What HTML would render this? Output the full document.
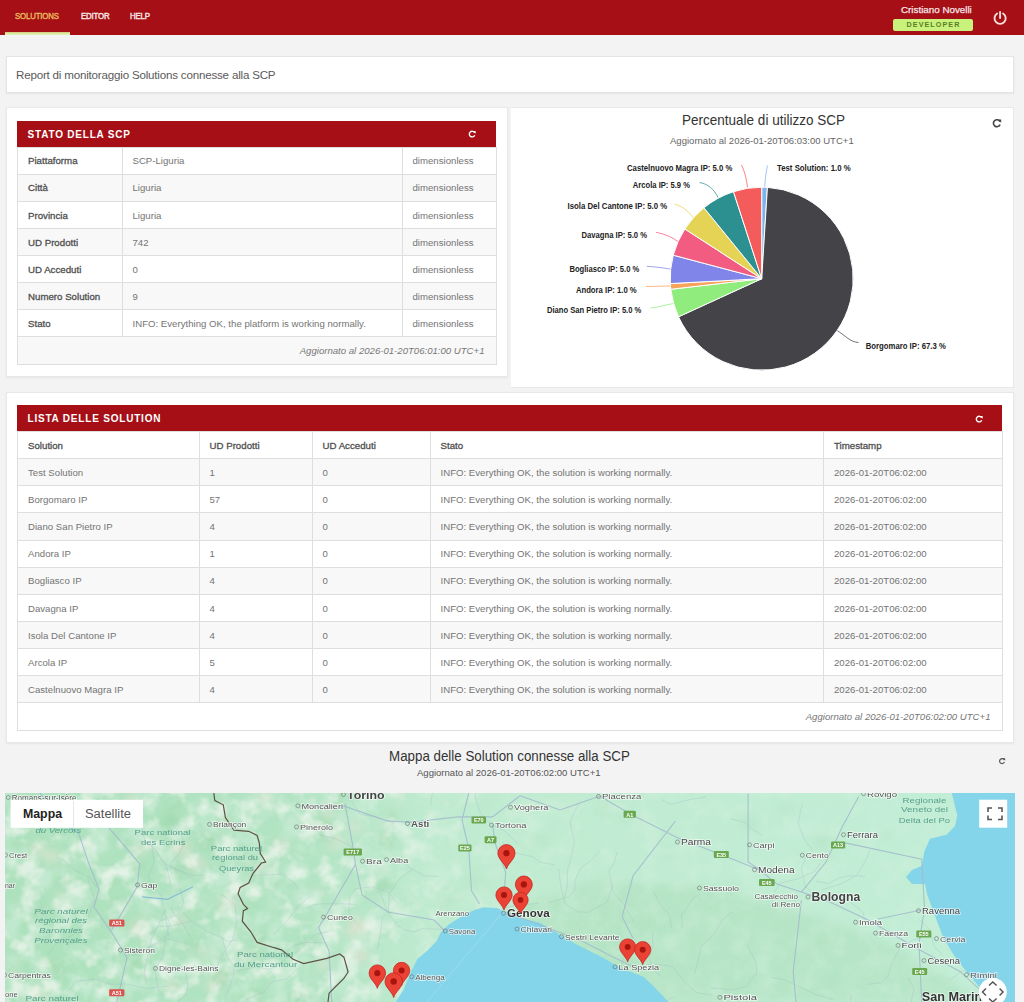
<!DOCTYPE html>
<html><head><meta charset="utf-8">
<style>
*{box-sizing:border-box;margin:0;padding:0}
html,body{width:1024px;height:1002px;overflow:hidden}
body{background:#f3f3f3;font-family:"Liberation Sans",sans-serif;color:#555;position:relative}
.abs{position:absolute}
#nav{left:0;top:0;width:1024px;height:35px;background:#a50f15}
.navi{position:absolute;top:11px;font-size:9px;color:#f6e4e4;-webkit-text-stroke:0.45px currentColor;letter-spacing:-0.2px;line-height:11px;transform:scaleX(0.87);transform-origin:0 0}
#uline{left:5px;top:32px;width:65px;height:3px;background:linear-gradient(#dcc27a,#d8eaa0 50%,#e2f3c0)}
.card{position:absolute;background:#fff;border:1px solid #e4e4e4;box-shadow:0 1px 2px rgba(0,0,0,0.06)}
.phead{position:absolute;background:#a50f15;color:#fff;font-weight:bold;font-size:10px;letter-spacing:0.8px}
.ref{position:absolute}
table{border-collapse:collapse;position:absolute;font-size:9.6px;color:#747474;table-layout:fixed}
td,th{border:1px solid #dedede;padding:0.4px 0 0 10px;height:27.15px;vertical-align:middle;text-align:left;white-space:nowrap;letter-spacing:0.02px;font-weight:normal}
th,td.b{color:#505050;font-size:9.7px;-webkit-text-stroke:0.3px currentColor;letter-spacing:0px}
tr.g td{background:#f8f8f8}
td.ft{text-align:right;font-style:italic;color:#777;padding-right:11px;letter-spacing:0px}
</style></head><body>
<div id="nav" class="abs">
  <div class="navi" style="left:15px;color:#e9b45c">SOLUTIONS</div>
  <div class="navi" style="left:81px">EDITOR</div>
  <div class="navi" style="left:130px">HELP</div>
  <div class="abs" style="left:901px;top:3.5px;font-size:9.8px;line-height:11px;color:#f6e6e6;letter-spacing:0px;-webkit-text-stroke:0.25px currentColor">Cristiano Novelli</div>
  <div class="abs" style="left:893px;top:19px;width:80px;height:12px;background:#c9f27c;border-radius:2px;font-size:7.2px;color:#5b7d24;letter-spacing:1.05px;text-align:center;line-height:12.5px;font-weight:bold;padding-left:1px">DEVELOPER</div>
  <svg class="abs" style="left:992px;top:10px" width="16" height="16" viewBox="0 0 16 16"><path d="M5.1 3.5A5.6 5.6 0 1 0 11.1 3.5" fill="none" stroke="#f8dcdc" stroke-width="1.9" stroke-linecap="round"/><path d="M8.1 2V8.1" stroke="#f8dcdc" stroke-width="1.9" stroke-linecap="round"/></svg>
</div>
<div id="uline" class="abs"></div>

<div class="card" style="left:6px;top:56px;width:1008px;height:37px">
  <div class="abs" style="left:9px;top:10px;font-size:11.6px;line-height:15px;color:#5a5a5a;letter-spacing:-0.2px">Report di monitoraggio Solutions connesse alla SCP</div>
</div>

<!-- left card -->
<div class="card" style="left:6px;top:107px;width:502px;height:270px;border-color:#e8e8e8"></div>
<div class="phead" style="left:17px;top:121px;width:478.5px;height:25.5px;line-height:27.5px;padding-left:10.5px">STATO DELLA SCP</div>
<svg class="ref" style="left:467.2px;top:129.3px" width="10" height="10" viewBox="-5 -5 10 10"><path d="M2.6 -1.2A2.8 2.8 0 1 0 2.7 1.2" fill="none" stroke="#fff" stroke-width="1.4"/><path d="M0.8 -3L3.6 -3L3.6 -0.2Z" fill="#fff"/></svg>
<table style="left:17px;top:146.5px;width:478.5px">
<col style="width:104.5px"><col style="width:280px"><col style="width:94px">
<tr><td class="b">Piattaforma</td><td>SCP-Liguria</td><td>dimensionless</td></tr>
<tr class="g"><td class="b">Città</td><td>Liguria</td><td>dimensionless</td></tr>
<tr><td class="b">Provincia</td><td>Liguria</td><td>dimensionless</td></tr>
<tr class="g"><td class="b">UD Prodotti</td><td>742</td><td>dimensionless</td></tr>
<tr><td class="b">UD Acceduti</td><td>0</td><td>dimensionless</td></tr>
<tr class="g"><td class="b">Numero Solution</td><td>9</td><td>dimensionless</td></tr>
<tr><td class="b">Stato</td><td>INFO: Everything OK, the platform is working normally.</td><td>dimensionless</td></tr>
<tr class="g"><td colspan="3" class="ft">Aggiornato al 2026-01-20T06:01:00 UTC+1</td></tr>
</table>

<svg class="abs" style="left:511px;top:107px" width="503" height="281" viewBox="511 107 503 281">
<rect x="510.5" y="107.5" width="503" height="280" fill="#fff" stroke="#e8e8e8"/>
<text x="682" y="125" textLength="163" lengthAdjust="spacingAndGlyphs" font-size="14.5" fill="#333">Percentuale di utilizzo SCP</text>
<text x="670" y="143.9" textLength="183.7" lengthAdjust="spacingAndGlyphs" font-size="9" fill="#666">Aggiornato al 2026-01-20T06:03:00 UTC+1</text>
<g transform="translate(996.8 123.2)"><path d="M3.2 -1.6A3.5 3.5 0 1 0 3.3 1.4" fill="none" stroke="#444" stroke-width="1.6"/><path d="M1.2 -3.6L4.4 -3.6L4.4 -0.4Z" fill="#444"/></g>
<path d="M741.5 165C744 170 746.5 178 747.5 187.5" fill="none" stroke="#f45b5b" stroke-width="1" opacity="0.75"/><path d="M767.5 165.5C766 172 765 180 764.8 187" fill="none" stroke="#7cb5ec" stroke-width="1" opacity="0.75"/><path d="M699.5 182.5C708 184 714 189 718 197.5" fill="none" stroke="#2b908f" stroke-width="1" opacity="0.75"/><path d="M674.3 204C682 206 688 211 693.5 217.8" fill="none" stroke="#e4d354" stroke-width="1" opacity="0.75"/><path d="M656 232.3C665 234 672 237 678 241.6" fill="none" stroke="#f15c80" stroke-width="1" opacity="0.75"/><path d="M646.8 266.3C657 267 664 268 670.7 269.2" fill="none" stroke="#8085e9" stroke-width="1" opacity="0.75"/><path d="M645.7 286.5C655 286.5 663 286 670.5 286" fill="none" stroke="#f7a35c" stroke-width="1" opacity="0.75"/><path d="M650.6 308C659 307 666 305 673.6 303.4" fill="none" stroke="#90ed7d" stroke-width="1" opacity="0.75"/><path d="M837.1 330.5C846 336 850 342 858.5 342.5" fill="none" stroke="#434348" stroke-width="1" opacity="0.75"/>
<path d="M761.7 278.7L761.70 187.20A91.5 91.5 0 0 1 767.43 187.38Z" fill="#7cb5ec" stroke="#fff" stroke-width="1" stroke-linejoin="round"/><path d="M761.7 278.7L767.43 187.38A91.5 91.5 0 1 1 678.51 316.81Z" fill="#434348" stroke="#fff" stroke-width="1" stroke-linejoin="round"/><path d="M761.7 278.7L678.51 316.81A91.5 91.5 0 0 1 670.81 289.29Z" fill="#90ed7d" stroke="#fff" stroke-width="1" stroke-linejoin="round"/><path d="M761.7 278.7L670.81 289.29A91.5 91.5 0 0 1 670.33 283.57Z" fill="#f7a35c" stroke="#fff" stroke-width="1" stroke-linejoin="round"/><path d="M761.7 278.7L670.33 283.57A91.5 91.5 0 0 1 673.28 255.16Z" fill="#8085e9" stroke="#fff" stroke-width="1" stroke-linejoin="round"/><path d="M761.7 278.7L673.28 255.16A91.5 91.5 0 0 1 684.85 229.03Z" fill="#f15c80" stroke="#fff" stroke-width="1" stroke-linejoin="round"/><path d="M761.7 278.7L684.85 229.03A91.5 91.5 0 0 1 703.92 207.75Z" fill="#e4d354" stroke="#fff" stroke-width="1" stroke-linejoin="round"/><path d="M761.7 278.7L703.92 207.75A91.5 91.5 0 0 1 733.48 191.66Z" fill="#2b908f" stroke="#fff" stroke-width="1" stroke-linejoin="round"/><path d="M761.7 278.7L733.48 191.66A91.5 91.5 0 0 1 761.70 187.20Z" fill="#f45b5b" stroke="#fff" stroke-width="1" stroke-linejoin="round"/>
<g font-size="8.4" font-weight="bold" fill="#222" stroke="#fff" stroke-width="0.6" paint-order="stroke"><text x="627.0" y="171.0" textLength="105.3" lengthAdjust="spacingAndGlyphs">Castelnuovo Magra IP: 5.0 %</text><text x="777" y="170.7" textLength="73.6" lengthAdjust="spacingAndGlyphs">Test Solution: 1.0 %</text><text x="632.8" y="187.5" textLength="57.2" lengthAdjust="spacingAndGlyphs">Arcola IP: 5.9 %</text><text x="567.5" y="208.5" textLength="99.7" lengthAdjust="spacingAndGlyphs">Isola Del Cantone IP: 5.0 %</text><text x="581.5" y="237.5" textLength="65.5" lengthAdjust="spacingAndGlyphs">Davagna IP: 5.0 %</text><text x="569.4" y="271.7" textLength="69.9" lengthAdjust="spacingAndGlyphs">Bogliasco IP: 5.0 %</text><text x="575.9" y="292.8" textLength="60.8" lengthAdjust="spacingAndGlyphs">Andora IP: 1.0 %</text><text x="546.9" y="312.8" textLength="94.5" lengthAdjust="spacingAndGlyphs">Diano San Pietro IP: 5.0 %</text><text x="865.7" y="348.5" textLength="80.1" lengthAdjust="spacingAndGlyphs">Borgomaro IP: 67.3 %</text></g>
</svg>

<!-- solutions list -->
<div class="card" style="left:6px;top:392px;width:1008px;height:351px;border-color:#e8e8e8"></div>
<div class="phead" style="left:17px;top:405px;width:984.5px;height:26px;line-height:27.5px;padding-left:10.5px">LISTA DELLE SOLUTION</div>
<svg class="ref" style="left:974.2px;top:413.6px" width="10" height="10" viewBox="-5 -5 10 10"><path d="M2.6 -1.2A2.8 2.8 0 1 0 2.7 1.2" fill="none" stroke="#fff" stroke-width="1.4"/><path d="M0.8 -3L3.6 -3L3.6 -0.2Z" fill="#fff"/></svg>
<table style="left:17px;top:431px;width:984.5px">
<col style="width:181.5px"><col style="width:113px"><col style="width:118px"><col style="width:393.5px"><col style="width:178.5px">
<tr><th>Solution</th><th>UD Prodotti</th><th>UD Acceduti</th><th>Stato</th><th>Timestamp</th></tr>
<tr class="g"><td>Test Solution</td><td>1</td><td>0</td><td>INFO: Everything OK, the solution is working normally.</td><td>2026-01-20T06:02:00</td></tr>
<tr><td>Borgomaro IP</td><td>57</td><td>0</td><td>INFO: Everything OK, the solution is working normally.</td><td>2026-01-20T06:02:00</td></tr>
<tr class="g"><td>Diano San Pietro IP</td><td>4</td><td>0</td><td>INFO: Everything OK, the solution is working normally.</td><td>2026-01-20T06:02:00</td></tr>
<tr><td>Andora IP</td><td>1</td><td>0</td><td>INFO: Everything OK, the solution is working normally.</td><td>2026-01-20T06:02:00</td></tr>
<tr class="g"><td>Bogliasco IP</td><td>4</td><td>0</td><td>INFO: Everything OK, the solution is working normally.</td><td>2026-01-20T06:02:00</td></tr>
<tr><td>Davagna IP</td><td>4</td><td>0</td><td>INFO: Everything OK, the solution is working normally.</td><td>2026-01-20T06:02:00</td></tr>
<tr class="g"><td>Isola Del Cantone IP</td><td>4</td><td>0</td><td>INFO: Everything OK, the solution is working normally.</td><td>2026-01-20T06:02:00</td></tr>
<tr><td>Arcola IP</td><td>5</td><td>0</td><td>INFO: Everything OK, the solution is working normally.</td><td>2026-01-20T06:02:00</td></tr>
<tr class="g"><td>Castelnuovo Magra IP</td><td>4</td><td>0</td><td>INFO: Everything OK, the solution is working normally.</td><td>2026-01-20T06:02:00</td></tr>
<tr><td colspan="5" class="ft">Aggiornato al 2026-01-20T06:02:00 UTC+1</td></tr>
</table>

<!-- map title -->
<svg class="abs" style="left:0;top:740px" width="1024" height="53" viewBox="0 740 1024 53">
<text x="389.1" y="761" font-size="14" fill="#333" textLength="240.7" lengthAdjust="spacingAndGlyphs">Mappa delle Solution connesse alla SCP</text>
<text x="417" y="775.5" font-size="8.6" fill="#555" textLength="183.5" lengthAdjust="spacingAndGlyphs">Aggiornato al 2026-01-20T06:02:00 UTC+1</text>
<g transform="translate(1002 761)"><path d="M2.3 -1.1A2.5 2.5 0 1 0 2.4 1.1" fill="none" stroke="#555" stroke-width="1.2"/><path d="M0.7 -2.7L3.2 -2.7L3.2 -0.2Z" fill="#555"/></g>
</svg>

<svg class="abs" style="left:5px;top:793px" width="1010" height="209" viewBox="5 793 1010 209">
<defs><linearGradient id="lg" x1="0" x2="1" y1="0" y2="0"><stop offset="0" stop-color="#ade1bd"/><stop offset="0.3" stop-color="#b2e4c3"/><stop offset="0.42" stop-color="#bfebd0"/><stop offset="1" stop-color="#c3eed7"/></linearGradient>
<filter id="bl" x="-50%" y="-50%" width="200%" height="200%"><feGaussianBlur stdDeviation="4"/></filter></defs>
<rect x="5" y="793" width="1010" height="209" fill="url(#lg)"/>
<g filter="url(#bl)"><ellipse cx="133" cy="825" rx="8" ry="6" fill="#d6efde" opacity="0.6"/><ellipse cx="329" cy="813" rx="7" ry="5" fill="#e9dfd0" opacity="0.6"/><ellipse cx="90" cy="811" rx="6" ry="4" fill="#e2e6d6" opacity="0.6"/><ellipse cx="41" cy="882" rx="9" ry="7" fill="#d6efde" opacity="0.6"/><ellipse cx="379" cy="925" rx="7" ry="5" fill="#d6efde" opacity="0.6"/><ellipse cx="233" cy="876" rx="10" ry="7" fill="#d6efde" opacity="0.6"/><ellipse cx="225" cy="821" rx="6" ry="4" fill="#e9dfd0" opacity="0.6"/><ellipse cx="52" cy="857" rx="9" ry="7" fill="#e2e6d6" opacity="0.6"/><ellipse cx="46" cy="912" rx="4" ry="3" fill="#d6efde" opacity="0.6"/><ellipse cx="221" cy="806" rx="3" ry="3" fill="#e2e6d6" opacity="0.6"/><ellipse cx="201" cy="904" rx="8" ry="6" fill="#a3d8ae" opacity="0.6"/><ellipse cx="236" cy="888" rx="5" ry="4" fill="#e2e6d6" opacity="0.6"/><ellipse cx="281" cy="844" rx="7" ry="5" fill="#e9dfd0" opacity="0.6"/><ellipse cx="201" cy="865" rx="6" ry="5" fill="#e9dfd0" opacity="0.6"/><ellipse cx="392" cy="818" rx="6" ry="4" fill="#9bd3a9" opacity="0.6"/><ellipse cx="65" cy="895" rx="3" ry="2" fill="#d0ecd8" opacity="0.6"/><ellipse cx="36" cy="910" rx="9" ry="6" fill="#9bd3a9" opacity="0.6"/><ellipse cx="139" cy="866" rx="6" ry="5" fill="#a3d8ae" opacity="0.6"/><ellipse cx="32" cy="813" rx="5" ry="4" fill="#d0ecd8" opacity="0.6"/><ellipse cx="267" cy="806" rx="8" ry="6" fill="#d0ecd8" opacity="0.6"/><ellipse cx="233" cy="935" rx="6" ry="5" fill="#d0ecd8" opacity="0.6"/><ellipse cx="157" cy="933" rx="3" ry="2" fill="#a3d8ae" opacity="0.6"/><ellipse cx="145" cy="921" rx="6" ry="5" fill="#e2e6d6" opacity="0.6"/><ellipse cx="308" cy="820" rx="5" ry="4" fill="#a3d8ae" opacity="0.6"/><ellipse cx="367" cy="897" rx="4" ry="3" fill="#a3d8ae" opacity="0.6"/><ellipse cx="222" cy="978" rx="9" ry="7" fill="#e9dfd0" opacity="0.6"/><ellipse cx="115" cy="880" rx="6" ry="4" fill="#a3d8ae" opacity="0.6"/><ellipse cx="383" cy="825" rx="4" ry="3" fill="#e2e6d6" opacity="0.6"/><ellipse cx="265" cy="796" rx="9" ry="7" fill="#e2e6d6" opacity="0.6"/><ellipse cx="109" cy="794" rx="6" ry="4" fill="#9bd3a9" opacity="0.6"/><ellipse cx="246" cy="860" rx="4" ry="3" fill="#e9dfd0" opacity="0.6"/><ellipse cx="380" cy="930" rx="8" ry="6" fill="#a3d8ae" opacity="0.6"/><ellipse cx="360" cy="956" rx="9" ry="7" fill="#e9dfd0" opacity="0.6"/><ellipse cx="160" cy="876" rx="4" ry="3" fill="#d0ecd8" opacity="0.6"/><ellipse cx="163" cy="833" rx="10" ry="7" fill="#a3d8ae" opacity="0.6"/><ellipse cx="69" cy="864" rx="3" ry="3" fill="#d6efde" opacity="0.6"/><ellipse cx="229" cy="905" rx="10" ry="7" fill="#e9dfd0" opacity="0.6"/><ellipse cx="15" cy="976" rx="7" ry="5" fill="#e2e6d6" opacity="0.6"/><ellipse cx="256" cy="993" rx="7" ry="5" fill="#a3d8ae" opacity="0.6"/><ellipse cx="54" cy="970" rx="10" ry="7" fill="#a3d8ae" opacity="0.6"/><ellipse cx="195" cy="858" rx="4" ry="3" fill="#d0ecd8" opacity="0.6"/><ellipse cx="140" cy="848" rx="9" ry="7" fill="#e2e6d6" opacity="0.6"/><ellipse cx="209" cy="836" rx="10" ry="7" fill="#9bd3a9" opacity="0.6"/><ellipse cx="63" cy="907" rx="3" ry="2" fill="#e9dfd0" opacity="0.6"/><ellipse cx="123" cy="927" rx="4" ry="3" fill="#9bd3a9" opacity="0.6"/><ellipse cx="210" cy="983" rx="5" ry="4" fill="#e2e6d6" opacity="0.6"/><ellipse cx="215" cy="956" rx="5" ry="4" fill="#e2e6d6" opacity="0.6"/><ellipse cx="247" cy="958" rx="8" ry="6" fill="#e2e6d6" opacity="0.6"/><ellipse cx="323" cy="964" rx="8" ry="6" fill="#e2e6d6" opacity="0.6"/><ellipse cx="84" cy="896" rx="8" ry="6" fill="#d6efde" opacity="0.6"/><ellipse cx="317" cy="892" rx="4" ry="3" fill="#e9dfd0" opacity="0.6"/><ellipse cx="383" cy="886" rx="10" ry="7" fill="#9bd3a9" opacity="0.6"/><ellipse cx="382" cy="869" rx="5" ry="3" fill="#e2e6d6" opacity="0.6"/><ellipse cx="191" cy="864" rx="6" ry="5" fill="#e9dfd0" opacity="0.6"/><ellipse cx="337" cy="893" rx="8" ry="6" fill="#d0ecd8" opacity="0.6"/><ellipse cx="38" cy="931" rx="9" ry="7" fill="#d0ecd8" opacity="0.6"/><ellipse cx="301" cy="893" rx="4" ry="3" fill="#d0ecd8" opacity="0.6"/><ellipse cx="136" cy="960" rx="10" ry="7" fill="#a3d8ae" opacity="0.6"/><ellipse cx="188" cy="948" rx="4" ry="3" fill="#e2e6d6" opacity="0.6"/><ellipse cx="72" cy="820" rx="4" ry="3" fill="#a3d8ae" opacity="0.6"/><ellipse cx="324" cy="824" rx="9" ry="7" fill="#a3d8ae" opacity="0.6"/><ellipse cx="265" cy="866" rx="7" ry="5" fill="#e2e6d6" opacity="0.6"/><ellipse cx="13" cy="960" rx="8" ry="6" fill="#d6efde" opacity="0.6"/><ellipse cx="213" cy="988" rx="6" ry="5" fill="#e2e6d6" opacity="0.6"/><ellipse cx="331" cy="837" rx="5" ry="4" fill="#9bd3a9" opacity="0.6"/><ellipse cx="203" cy="953" rx="5" ry="4" fill="#e9dfd0" opacity="0.6"/><ellipse cx="171" cy="820" rx="9" ry="7" fill="#9bd3a9" opacity="0.6"/><ellipse cx="360" cy="931" rx="9" ry="7" fill="#e9dfd0" opacity="0.6"/><ellipse cx="171" cy="985" rx="7" ry="5" fill="#e9dfd0" opacity="0.6"/><ellipse cx="65" cy="900" rx="9" ry="7" fill="#e2e6d6" opacity="0.6"/><ellipse cx="245" cy="955" rx="4" ry="3" fill="#e2e6d6" opacity="0.6"/><ellipse cx="192" cy="945" rx="7" ry="5" fill="#9bd3a9" opacity="0.6"/><ellipse cx="275" cy="904" rx="6" ry="5" fill="#d6efde" opacity="0.6"/><ellipse cx="354" cy="805" rx="4" ry="3" fill="#d6efde" opacity="0.6"/><ellipse cx="310" cy="899" rx="7" ry="5" fill="#d6efde" opacity="0.6"/><ellipse cx="180" cy="921" rx="7" ry="5" fill="#e9dfd0" opacity="0.6"/><ellipse cx="84" cy="851" rx="7" ry="5" fill="#a3d8ae" opacity="0.6"/><ellipse cx="206" cy="845" rx="7" ry="5" fill="#9bd3a9" opacity="0.6"/><ellipse cx="369" cy="980" rx="4" ry="3" fill="#a3d8ae" opacity="0.6"/><ellipse cx="59" cy="818" rx="6" ry="5" fill="#d6efde" opacity="0.6"/><ellipse cx="270" cy="883" rx="4" ry="3" fill="#9bd3a9" opacity="0.6"/><ellipse cx="315" cy="980" rx="4" ry="3" fill="#d0ecd8" opacity="0.6"/><ellipse cx="259" cy="870" rx="5" ry="4" fill="#e2e6d6" opacity="0.6"/><ellipse cx="387" cy="839" rx="10" ry="7" fill="#a3d8ae" opacity="0.6"/><ellipse cx="355" cy="827" rx="8" ry="6" fill="#e2e6d6" opacity="0.6"/><ellipse cx="69" cy="883" rx="7" ry="5" fill="#9bd3a9" opacity="0.6"/><ellipse cx="171" cy="868" rx="4" ry="3" fill="#9bd3a9" opacity="0.6"/><ellipse cx="13" cy="909" rx="6" ry="5" fill="#d6efde" opacity="0.6"/><ellipse cx="157" cy="901" rx="5" ry="4" fill="#d6efde" opacity="0.6"/><ellipse cx="50" cy="985" rx="5" ry="3" fill="#d6efde" opacity="0.6"/><ellipse cx="38" cy="850" rx="9" ry="7" fill="#e2e6d6" opacity="0.6"/><ellipse cx="112" cy="820" rx="6" ry="4" fill="#d0ecd8" opacity="0.6"/><ellipse cx="328" cy="847" rx="4" ry="3" fill="#e9dfd0" opacity="0.6"/><ellipse cx="230" cy="939" rx="4" ry="3" fill="#d6efde" opacity="0.6"/><ellipse cx="321" cy="831" rx="9" ry="7" fill="#9bd3a9" opacity="0.6"/><ellipse cx="376" cy="926" rx="9" ry="6" fill="#d6efde" opacity="0.6"/><ellipse cx="245" cy="839" rx="5" ry="4" fill="#d6efde" opacity="0.6"/><ellipse cx="184" cy="864" rx="7" ry="5" fill="#9bd3a9" opacity="0.6"/><ellipse cx="251" cy="802" rx="8" ry="6" fill="#d6efde" opacity="0.6"/><ellipse cx="388" cy="848" rx="4" ry="3" fill="#9bd3a9" opacity="0.6"/><ellipse cx="253" cy="904" rx="4" ry="3" fill="#a3d8ae" opacity="0.6"/><ellipse cx="203" cy="830" rx="5" ry="4" fill="#d6efde" opacity="0.6"/><ellipse cx="398" cy="801" rx="3" ry="2" fill="#e9dfd0" opacity="0.6"/><ellipse cx="223" cy="833" rx="6" ry="5" fill="#a3d8ae" opacity="0.6"/><ellipse cx="47" cy="964" rx="6" ry="5" fill="#a3d8ae" opacity="0.6"/><ellipse cx="221" cy="979" rx="10" ry="7" fill="#9bd3a9" opacity="0.6"/><ellipse cx="277" cy="998" rx="5" ry="4" fill="#d0ecd8" opacity="0.6"/><ellipse cx="293" cy="822" rx="10" ry="7" fill="#d6efde" opacity="0.6"/><ellipse cx="336" cy="796" rx="7" ry="6" fill="#9bd3a9" opacity="0.6"/><ellipse cx="175" cy="805" rx="8" ry="6" fill="#a3d8ae" opacity="0.6"/><ellipse cx="349" cy="933" rx="5" ry="4" fill="#e2e6d6" opacity="0.6"/><ellipse cx="279" cy="802" rx="4" ry="3" fill="#9bd3a9" opacity="0.6"/><ellipse cx="181" cy="848" rx="10" ry="7" fill="#e9dfd0" opacity="0.6"/><ellipse cx="133" cy="800" rx="9" ry="7" fill="#e2e6d6" opacity="0.6"/><ellipse cx="146" cy="793" rx="6" ry="4" fill="#a3d8ae" opacity="0.6"/><ellipse cx="115" cy="930" rx="5" ry="4" fill="#d6efde" opacity="0.6"/><ellipse cx="41" cy="964" rx="4" ry="3" fill="#e9dfd0" opacity="0.6"/><ellipse cx="21" cy="798" rx="5" ry="4" fill="#e2e6d6" opacity="0.6"/><ellipse cx="38" cy="993" rx="9" ry="7" fill="#e2e6d6" opacity="0.6"/><ellipse cx="265" cy="943" rx="9" ry="7" fill="#a3d8ae" opacity="0.6"/><ellipse cx="307" cy="944" rx="6" ry="5" fill="#9bd3a9" opacity="0.6"/><ellipse cx="291" cy="927" rx="3" ry="2" fill="#d0ecd8" opacity="0.6"/><ellipse cx="357" cy="924" rx="8" ry="6" fill="#e9dfd0" opacity="0.6"/><ellipse cx="60" cy="902" rx="7" ry="5" fill="#d6efde" opacity="0.6"/><ellipse cx="331" cy="915" rx="9" ry="7" fill="#d0ecd8" opacity="0.6"/><ellipse cx="383" cy="927" rx="4" ry="3" fill="#d6efde" opacity="0.6"/><ellipse cx="58" cy="868" rx="4" ry="3" fill="#a3d8ae" opacity="0.6"/><ellipse cx="226" cy="924" rx="7" ry="6" fill="#d0ecd8" opacity="0.6"/><ellipse cx="102" cy="848" rx="6" ry="5" fill="#d6efde" opacity="0.6"/><ellipse cx="301" cy="898" rx="7" ry="5" fill="#d0ecd8" opacity="0.6"/><ellipse cx="213" cy="949" rx="6" ry="5" fill="#d6efde" opacity="0.6"/><ellipse cx="339" cy="842" rx="8" ry="6" fill="#e2e6d6" opacity="0.6"/><ellipse cx="297" cy="997" rx="6" ry="5" fill="#a3d8ae" opacity="0.6"/><ellipse cx="35" cy="983" rx="5" ry="4" fill="#d6efde" opacity="0.6"/><ellipse cx="249" cy="927" rx="4" ry="3" fill="#e2e6d6" opacity="0.6"/><ellipse cx="136" cy="929" rx="8" ry="6" fill="#e9dfd0" opacity="0.6"/><ellipse cx="229" cy="796" rx="3" ry="3" fill="#9bd3a9" opacity="0.6"/><ellipse cx="389" cy="814" rx="5" ry="3" fill="#a3d8ae" opacity="0.6"/><ellipse cx="120" cy="901" rx="6" ry="5" fill="#a3d8ae" opacity="0.6"/><ellipse cx="308" cy="1001" rx="7" ry="5" fill="#9bd3a9" opacity="0.6"/><ellipse cx="987" cy="989" rx="5" ry="4" fill="#b4e3c4" opacity="0.5"/><ellipse cx="446" cy="899" rx="12" ry="8" fill="#b4e3c4" opacity="0.5"/><ellipse cx="632" cy="985" rx="12" ry="8" fill="#d2f1de" opacity="0.5"/><ellipse cx="749" cy="823" rx="9" ry="6" fill="#b4e3c4" opacity="0.5"/><ellipse cx="480" cy="964" rx="9" ry="6" fill="#d2f1de" opacity="0.5"/><ellipse cx="822" cy="841" rx="11" ry="8" fill="#b4e3c4" opacity="0.5"/><ellipse cx="636" cy="826" rx="12" ry="8" fill="#cbeed8" opacity="0.5"/><ellipse cx="670" cy="856" rx="6" ry="4" fill="#b4e3c4" opacity="0.5"/><ellipse cx="626" cy="818" rx="7" ry="5" fill="#b4e3c4" opacity="0.5"/><ellipse cx="850" cy="968" rx="6" ry="4" fill="#d2f1de" opacity="0.5"/><ellipse cx="828" cy="981" rx="7" ry="5" fill="#b4e3c4" opacity="0.5"/><ellipse cx="439" cy="875" rx="11" ry="8" fill="#d2f1de" opacity="0.5"/><ellipse cx="616" cy="882" rx="7" ry="5" fill="#d2f1de" opacity="0.5"/><ellipse cx="568" cy="804" rx="10" ry="7" fill="#cbeed8" opacity="0.5"/><ellipse cx="961" cy="845" rx="7" ry="5" fill="#cbeed8" opacity="0.5"/><ellipse cx="589" cy="955" rx="10" ry="7" fill="#b4e3c4" opacity="0.5"/><ellipse cx="931" cy="963" rx="9" ry="7" fill="#cbeed8" opacity="0.5"/><ellipse cx="730" cy="943" rx="5" ry="4" fill="#cbeed8" opacity="0.5"/><ellipse cx="647" cy="922" rx="6" ry="4" fill="#b4e3c4" opacity="0.5"/><ellipse cx="691" cy="984" rx="9" ry="6" fill="#d2f1de" opacity="0.5"/><ellipse cx="683" cy="865" rx="7" ry="5" fill="#cbeed8" opacity="0.5"/><ellipse cx="843" cy="929" rx="8" ry="5" fill="#d2f1de" opacity="0.5"/><ellipse cx="581" cy="909" rx="8" ry="5" fill="#d2f1de" opacity="0.5"/><ellipse cx="786" cy="809" rx="9" ry="6" fill="#b4e3c4" opacity="0.5"/><ellipse cx="730" cy="888" rx="7" ry="5" fill="#b4e3c4" opacity="0.5"/><ellipse cx="656" cy="907" rx="7" ry="5" fill="#d2f1de" opacity="0.5"/><ellipse cx="605" cy="812" rx="7" ry="5" fill="#b4e3c4" opacity="0.5"/><ellipse cx="886" cy="835" rx="5" ry="4" fill="#b4e3c4" opacity="0.5"/><ellipse cx="630" cy="949" rx="6" ry="5" fill="#b4e3c4" opacity="0.5"/><ellipse cx="603" cy="806" rx="7" ry="5" fill="#b4e3c4" opacity="0.5"/><ellipse cx="476" cy="898" rx="9" ry="7" fill="#d2f1de" opacity="0.5"/><ellipse cx="456" cy="980" rx="8" ry="5" fill="#cbeed8" opacity="0.5"/><ellipse cx="668" cy="992" rx="11" ry="8" fill="#d2f1de" opacity="0.5"/><ellipse cx="476" cy="882" rx="10" ry="7" fill="#b4e3c4" opacity="0.5"/><ellipse cx="981" cy="895" rx="6" ry="4" fill="#cbeed8" opacity="0.5"/><ellipse cx="913" cy="996" rx="7" ry="5" fill="#d2f1de" opacity="0.5"/><ellipse cx="534" cy="825" rx="12" ry="8" fill="#d2f1de" opacity="0.5"/><ellipse cx="965" cy="944" rx="10" ry="7" fill="#b4e3c4" opacity="0.5"/><ellipse cx="451" cy="955" rx="5" ry="4" fill="#d2f1de" opacity="0.5"/><ellipse cx="540" cy="985" rx="10" ry="7" fill="#b4e3c4" opacity="0.5"/><ellipse cx="977" cy="924" rx="9" ry="6" fill="#b4e3c4" opacity="0.5"/><ellipse cx="819" cy="816" rx="5" ry="4" fill="#cbeed8" opacity="0.5"/><ellipse cx="966" cy="833" rx="7" ry="5" fill="#cbeed8" opacity="0.5"/><ellipse cx="401" cy="905" rx="12" ry="8" fill="#b4e3c4" opacity="0.5"/><ellipse cx="975" cy="928" rx="11" ry="8" fill="#b4e3c4" opacity="0.5"/><ellipse cx="716" cy="907" rx="5" ry="4" fill="#b4e3c4" opacity="0.5"/><ellipse cx="823" cy="857" rx="5" ry="4" fill="#b4e3c4" opacity="0.5"/><ellipse cx="931" cy="928" rx="6" ry="4" fill="#d2f1de" opacity="0.5"/><ellipse cx="800" cy="986" rx="7" ry="5" fill="#d2f1de" opacity="0.5"/><ellipse cx="817" cy="943" rx="8" ry="5" fill="#b4e3c4" opacity="0.5"/><ellipse cx="519" cy="960" rx="10" ry="7" fill="#cbeed8" opacity="0.5"/><ellipse cx="440" cy="897" rx="6" ry="4" fill="#d2f1de" opacity="0.5"/><ellipse cx="538" cy="839" rx="10" ry="7" fill="#b4e3c4" opacity="0.5"/><ellipse cx="465" cy="923" rx="9" ry="6" fill="#d2f1de" opacity="0.5"/><ellipse cx="691" cy="983" rx="5" ry="4" fill="#cbeed8" opacity="0.5"/><ellipse cx="488" cy="875" rx="6" ry="5" fill="#cbeed8" opacity="0.5"/><ellipse cx="485" cy="804" rx="5" ry="4" fill="#b4e3c4" opacity="0.5"/><ellipse cx="670" cy="942" rx="7" ry="5" fill="#d2f1de" opacity="0.5"/><ellipse cx="999" cy="988" rx="7" ry="5" fill="#d2f1de" opacity="0.5"/><ellipse cx="791" cy="903" rx="8" ry="6" fill="#b4e3c4" opacity="0.5"/></g>
<filter id="tx" x="0" y="0" width="100%" height="100%"><feTurbulence type="fractalNoise" baseFrequency="0.045" numOctaves="3" seed="5"/><feColorMatrix type="matrix" values="0 0 0 0 0.58  0 0 0 0 0.84  0 0 0 0 0.67  3.2 0 0 0 -1.45"/></filter>
<filter id="tx2" x="0" y="0" width="100%" height="100%"><feTurbulence type="fractalNoise" baseFrequency="0.05" numOctaves="3" seed="11"/><feColorMatrix type="matrix" values="0 0 0 0 0.90  0 0 0 0 0.93  0 0 0 0 0.88  3.2 0 0 0 -1.5"/></filter>
<linearGradient id="mk" x1="0" x2="1"><stop offset="0" stop-color="#fff"/><stop offset="0.33" stop-color="#fff"/><stop offset="0.5" stop-color="#444"/><stop offset="1" stop-color="#222"/></linearGradient><mask id="mm"><rect x="5" y="793" width="1009" height="209" fill="url(#mk)"/></mask>
<g mask="url(#mm)"><rect x="5" y="793" width="1009" height="209" filter="url(#tx)" opacity="0.7"/><rect x="5" y="793" width="1009" height="209" filter="url(#tx2)" opacity="0.7"/></g>
<mask id="ap"><path d="M470 1002 L470 930 L520 905 L600 880 L700 885 L780 905 L860 930 L930 965 L980 1002 Z" fill="#fff" filter="url(#bl)"/></mask>
<g mask="url(#ap)"><rect x="400" y="860" width="615" height="142" fill="#a9dbb6" opacity="0.45"/><rect x="400" y="860" width="615" height="142" filter="url(#tx)" opacity="0.5"/></g>
<g fill="none" stroke="#9fb8c2" stroke-width="0.7" opacity="0.45"><path d="M169.1 937.2 L165.3 915.6 L160.7 894.7 L150.5 883.1 L148.4 875.2 L154.3 862.5 L151.8 844.1"/><path d="M921.9 938.0 L913.6 939.8 L900.4 946.8 L890.7 965.8 L888.1 975.7 L881.3 982.7 L867.1 984.4"/><path d="M554.2 864.7 L539.9 862.3 L532.8 856.6 L515.7 853.2 L502.3 842.4"/><path d="M949.6 980.6 L961.0 971.4 L971.7 969.7 L989.4 979.9"/><path d="M412.6 869.3 L400.3 877.7 L389.3 893.9 L388.3 911.9 L382.4 917.4 L380.2 933.6 L377.5 949.4"/><path d="M322.0 997.8 L334.1 1013.4 L349.1 1024.5 L351.8 1035.6 L366.4 1050.6"/><path d="M178.1 882.6 L183.9 902.4 L178.0 914.7 L157.8 921.9"/><path d="M592.6 977.6 L571.9 973.2 L556.4 976.3 L543.2 980.3 L534.5 979.5 L515.1 984.4 L506.7 984.4"/><path d="M252.4 875.5 L270.8 874.7 L282.3 873.8 L294.4 883.1 L298.8 890.3"/><path d="M216.0 968.2 L222.0 955.6 L232.8 938.9 L236.9 923.9 L235.2 905.3 L221.7 894.0"/><path d="M954.2 797.9 L947.6 783.1 L937.7 773.7 L936.1 753.1 L930.4 745.7"/><path d="M98.5 798.3 L93.4 806.5 L91.0 818.5 L80.3 826.9 L63.6 827.6"/><path d="M185.7 972.2 L187.7 987.1 L185.5 995.7 L174.7 1003.6"/><path d="M865.1 876.2 L847.4 875.8 L839.1 878.1 L828.0 883.5 L816.1 881.2"/><path d="M505.6 907.8 L514.2 905.6 L526.6 904.3 L538.7 903.3"/><path d="M626.6 951.4 L621.8 963.4 L619.8 985.2 L624.4 993.0 L642.6 999.7 L652.9 1009.6"/><path d="M623.3 797.1 L613.4 785.6 L612.4 776.7 L599.2 765.6 L587.4 765.9 L573.8 764.4 L554.6 764.5"/><path d="M401.9 861.4 L410.0 868.1 L424.5 875.8 L438.8 876.3"/><path d="M634.4 922.5 L623.9 904.5 L613.1 891.9 L609.0 870.8 L613.5 864.1 L617.0 852.3"/><path d="M394.3 823.4 L378.7 817.4 L360.6 814.3 L347.7 796.6"/><path d="M170.6 883.6 L166.7 866.4 L154.6 848.9 L145.6 841.7 L142.2 832.1 L141.7 821.3"/><path d="M600.0 851.0 L590.3 861.2 L580.6 868.2 L575.1 880.5 L574.5 891.1 L568.5 897.0 L548.2 902.8"/><path d="M706.1 797.0 L692.1 799.2 L670.8 804.3 L661.8 799.8"/><path d="M973.0 832.8 L967.8 841.2 L951.2 851.5 L943.7 855.7"/><path d="M191.6 877.2 L174.0 868.8 L161.8 860.9 L153.2 846.0 L140.0 840.9"/><path d="M833.6 999.7 L814.9 994.2 L800.0 986.9 L782.4 979.2 L770.7 977.4"/><path d="M356.4 855.3 L351.2 846.0 L333.4 838.0 L320.7 835.4"/><path d="M166.3 915.3 L169.9 924.1 L165.3 938.9 L162.6 956.4 L155.0 969.7 L158.0 989.1 L163.0 996.1"/><path d="M355.5 904.3 L342.4 903.8 L322.3 903.8 L314.0 904.5 L306.1 908.3"/><path d="M682.5 928.4 L681.3 915.0 L693.5 897.8 L700.7 893.9"/><path d="M355.2 921.2 L348.8 913.2 L349.2 897.7 L355.7 888.9 L371.3 886.7 L388.8 892.2 L396.8 902.6"/><path d="M87.4 877.8 L94.6 898.5 L87.8 918.7 L73.2 934.9 L56.7 943.0 L47.3 955.2"/><path d="M373.5 1000.2 L375.3 1014.0 L373.4 1032.7 L365.2 1047.7 L363.8 1061.7"/><path d="M381.1 895.3 L388.1 913.1 L396.5 924.4 L404.6 930.2 L414.7 931.9 L422.5 928.6 L442.6 929.4"/><path d="M300.1 967.0 L286.2 978.8 L271.7 981.8 L263.7 992.2 L249.8 997.9 L237.7 1003.9 L221.9 1007.9"/><path d="M694.6 973.8 L699.2 956.2 L701.0 946.6 L713.0 935.4 L723.4 918.5 L732.7 911.8"/><path d="M134.2 950.1 L146.3 948.7 L155.5 942.8 L170.6 933.0"/><path d="M221.8 936.5 L226.7 955.6 L233.3 965.3 L234.0 974.1 L228.6 989.6 L221.1 1010.3"/><path d="M236.3 940.2 L228.2 941.8 L219.6 936.6 L206.4 931.4 L191.6 920.9 L181.3 911.3"/><path d="M236.3 971.1 L256.5 966.9 L269.1 969.3 L276.8 966.4 L290.0 954.7"/><path d="M302.8 994.6 L291.5 1006.9 L280.8 1010.0 L271.1 1022.0 L270.3 1035.7"/><path d="M762.1 835.5 L752.6 829.1 L745.7 822.8 L730.2 818.5"/><path d="M819.0 901.8 L805.1 885.5 L801.3 868.2 L806.7 855.5"/><path d="M579.2 802.7 L569.9 821.5 L574.5 842.5 L570.4 860.1 L567.6 870.0 L567.2 887.3 L563.6 900.3"/><path d="M802.2 804.2 L798.1 823.2 L804.6 840.1 L812.9 850.7"/><path d="M273.3 934.5 L287.5 920.2 L298.3 906.3 L309.4 896.8"/><path d="M558.6 869.0 L560.7 885.4 L564.9 903.7 L577.5 911.9 L588.6 912.3 L607.4 901.9 L612.8 883.9"/><path d="M851.0 994.5 L850.5 1007.7 L855.5 1023.2 L851.8 1040.5 L849.5 1052.9 L835.1 1066.6"/><path d="M150.1 935.0 L157.8 926.5 L170.4 926.1 L191.5 921.3"/><path d="M171.4 875.6 L170.2 864.8 L181.6 849.9 L183.8 840.5 L178.3 831.1 L171.2 823.1"/><path d="M652.7 932.2 L652.6 946.2 L649.4 957.9 L653.6 970.6 L660.0 975.6"/><path d="M97.1 888.0 L90.0 877.6 L75.4 870.5 L60.0 857.5"/><path d="M294.9 953.3 L301.2 948.3 L314.4 934.5 L328.6 931.5"/><path d="M908.0 977.2 L914.0 988.5 L911.3 1001.2 L903.4 1019.0 L902.2 1037.9 L910.7 1047.4"/><path d="M171.1 865.3 L178.0 870.1 L194.6 875.7 L204.4 874.7"/><path d="M325.9 942.9 L304.9 942.3 L293.8 945.5 L283.7 954.5 L264.4 959.8"/><path d="M747.3 945.4 L756.2 962.8 L756.7 973.4 L746.1 986.3 L732.0 989.8 L711.1 987.8"/><path d="M187.5 943.3 L167.2 938.8 L150.9 946.6 L132.4 955.9"/><path d="M171.1 907.7 L174.8 915.3 L181.7 922.5 L190.4 936.9"/><path d="M67.3 991.7 L76.1 981.2 L96.1 979.1 L110.0 984.3 L125.9 984.0 L147.1 988.4 L167.9 986.1"/><path d="M146.5 984.9 L144.2 971.7 L147.0 958.8 L151.7 938.6 L160.8 920.3 L166.4 906.8"/><path d="M518.0 843.5 L505.2 831.4 L490.3 824.1 L480.1 812.4 L474.9 796.4 L479.1 785.5"/><path d="M673.2 997.2 L657.1 1005.4 L644.9 1019.3 L636.1 1032.1 L633.8 1043.5"/><path d="M866.2 927.5 L862.9 911.9 L845.6 898.4 L837.5 897.3"/><path d="M770.7 898.8 L779.6 883.4 L798.8 878.5 L814.1 871.7 L820.5 863.1"/><path d="M712.8 995.4 L696.2 992.5 L685.3 982.4 L672.2 966.6 L659.4 964.3 L646.6 964.6"/><path d="M430.7 804.9 L431.9 795.6 L439.7 776.4 L437.4 760.4 L430.8 746.5"/><path d="M919.4 919.4 L930.0 929.6 L933.7 945.6 L943.0 955.5"/><path d="M821.7 889.9 L841.8 883.6 L856.5 875.7 L866.4 859.1 L869.7 850.1"/><path d="M671.4 927.7 L669.8 915.1 L660.8 905.2 L653.3 891.4"/></g>
<path d="M395.6 1002.0 L403.4 990.0 L411.3 971.3 L417.5 958.8 L426.9 950.9 L436.3 941.6 L440.9 932.2 L448.8 924.4 L461.3 916.6 L473.8 910.3 L483.1 907.2 L497.2 908.0 L505.0 911.9 L520.6 918.1 L540.0 922.8 L548.4 927.7 L575.7 944.0 L603.0 957.7 L622.2 968.7 L644.0 976.9 L655.0 987.8 L668.7 1002.0 Z" fill="#84d5ea"/>
<path d="M951.8 793.0 L957.3 815.5 L955.0 826.0 L946.4 834.7 L929.9 838.8 L924.5 851.0 L921.7 866.0 L912.0 870.0 L906.0 877.0 L912.0 884.0 L925.0 884.0 L927.2 894.8 L935.4 916.7 L943.6 938.6 L957.3 960.5 L971.0 976.9 L984.6 993.3 L990.0 1002.0 L1015.0 1002.0 L1015.0 793.0 Z" fill="#84d5ea"/>
<path d="M426.9 1002 L501.9 913.4" stroke="#9bdcec" stroke-width="1"/>
<g fill="none" stroke="#a2b9cc" stroke-width="1.1" opacity="0.85"><path d="M344.9 803.7 L352.8 845.9 L355.5 864.4 L326.5 914.5 L318.5 927.6 L329.1 951.4 L331.7 1002.0"/><path d="M300.0 806.0 L344.9 806.4 L387.1 820.9 L410.8 822.2 L458.3 816.9 L492.6 816.9 L520.0 795.8"/><path d="M355.5 864.4 L362.0 895.0 L388.0 912.0 L434.0 920.0 L445.0 931.0"/><path d="M492.6 824.8 L495.2 843.3 L505.7 872.3 L503.0 909.2"/><path d="M468.8 793.0 L462.0 820.0 L468.8 848.5 L471.5 890.7 L479.4 903.9"/><path d="M600.3 796.4 L633.1 815.5 L676.9 837.4 L726.1 856.6 L760.0 870.2 L776.8 883.9 L801.4 892.1 L826.0 900.3 L867.0 919.5 L899.9 938.6 L919.0 949.5 L960.0 971.4 L990.0 998.8"/><path d="M801.4 892.1 L826.0 862.0 L842.4 826.5 L858.8 796.4"/><path d="M845.2 842.9 L921.7 859.3 L924.5 908.5 L919.0 944.0 L921.7 1002.0"/><path d="M675.5 821.0 L633.1 875.7 L622.2 916.7 L633.1 938.6"/><path d="M748.1 793.7 L748.1 862.0 L760.0 870.0"/><path d="M801.4 900.3 L793.2 971.4 L796.0 1002.0"/><path d="M78.7 833.3 L88.9 863.8 L99.0 889.2 L94.0 907.0 L111.7 932.4 L127.0 957.8 L116.8 1002.0"/><path d="M109.2 828.2 L139.7 863.8 L137.1 886.7 L119.4 917.1 L111.7 929.8"/><path d="M878.0 919.0 L921.0 910.0"/><path d="M520.0 795.8 L560.0 810.0 L600.0 796.0"/><path d="M505.0 912.0 L540.0 925.0 L580.0 940.0 L615.0 958.0 L640.0 970.0"/></g>
<g fill="none" stroke="#7ab4d4" stroke-width="1.2" opacity="0.8"><path d="M142.2 896.8 L167.6 899.3 L193.0 886.7"/><path d="M40.0 793.0 L60.0 820.0 L78.7 833.3"/></g>
<path d="M213.8 793.2 L214.8 800.6 L223.3 804.8 L225.4 817.5 L233.9 830.2 L248.7 831.3 L257.1 835.5 L259.3 842.9 L260.3 853.5 L265.6 862.0 L261.4 863.0 L252.9 873.6 L248.7 883.1 L240.2 887.4 L238.1 893.7 L243.4 904.3 L247.6 908.5 L243.4 910.6 L242.3 921.2 L250.8 931.8 L257.1 942.4 L274.1 947.7 L281.5 949.8 L293.1 959.3 L303.7 963.5 L327.0 958.3 L339.7 954.0 L343.9 957.2 L348.1 972.0 L343.9 978.4 L335.4 986.8 L329.1 993.2 L328.0 1002.0" fill="none" stroke="#5e5246" stroke-width="1.2"/>
<g font-size="8" fill="#58a08c"><text x="35.5" y="832.5" textLength="45.8" lengthAdjust="spacingAndGlyphs" font-style="italic">du Vercors</text><text x="134.6" y="835.0" textLength="55.8" lengthAdjust="spacingAndGlyphs">Parc national</text><text x="141" y="844.7" textLength="44.4" lengthAdjust="spacingAndGlyphs">des Ecrins</text><text x="210.8" y="851.0" textLength="51.2" lengthAdjust="spacingAndGlyphs">Parc naturel</text><text x="212" y="860.4" textLength="46.0" lengthAdjust="spacingAndGlyphs">régional du</text><text x="219" y="870.6" textLength="35.0" lengthAdjust="spacingAndGlyphs">Queyras</text><text x="34.3" y="913.8" textLength="53.3" lengthAdjust="spacingAndGlyphs" font-style="italic">Parc naturel</text><text x="35" y="923.4" textLength="52.0" lengthAdjust="spacingAndGlyphs" font-style="italic">régional des</text><text x="39" y="933.3" textLength="44.0" lengthAdjust="spacingAndGlyphs" font-style="italic">Baronnies</text><text x="34.3" y="943.0" textLength="53.3" lengthAdjust="spacingAndGlyphs" font-style="italic">Provençales</text><text x="25.4" y="1001.4" textLength="53.3" lengthAdjust="spacingAndGlyphs">Parc naturel</text><text x="237" y="956.6" textLength="56.1" lengthAdjust="spacingAndGlyphs">Parc national</text><text x="233.9" y="966.5" textLength="63.5" lengthAdjust="spacingAndGlyphs">du Mercantour</text><text x="902.6" y="802.7" textLength="43.8" lengthAdjust="spacingAndGlyphs">Regionale</text><text x="901" y="812.3" textLength="47.0" lengthAdjust="spacingAndGlyphs">Veneto del</text><text x="898.8" y="822.6" textLength="51.2" lengthAdjust="spacingAndGlyphs">Delta del Po</text></g>
<rect x="109.2" y="919.5" width="15.2" height="7" rx="1.2" fill="#d9534f"/><text x="116.8" y="925.3" font-size="5.5" fill="#fff" text-anchor="middle" font-weight="bold">A51</text>
<rect x="109.2" y="989.3" width="15.2" height="7" rx="1.2" fill="#d9534f"/><text x="116.8" y="995.1" font-size="5.5" fill="#fff" text-anchor="middle" font-weight="bold">A51</text>
<rect x="471.5" y="816.5" width="14.5" height="7" rx="1.2" fill="#6aa84f"/><text x="478.8" y="822.3" font-size="5.5" fill="#fff" text-anchor="middle" font-weight="bold">E70</text>
<rect x="484.6" y="836.3" width="11.9" height="7" rx="1.2" fill="#6aa84f"/><text x="490.6" y="842.1" font-size="5.5" fill="#fff" text-anchor="middle" font-weight="bold">A7</text>
<rect x="458.3" y="844.5" width="13.2" height="7" rx="1.2" fill="#6aa84f"/><text x="464.9" y="850.3" font-size="5.5" fill="#fff" text-anchor="middle" font-weight="bold">E25</text>
<rect x="343.6" y="848.5" width="18.4" height="7" rx="1.2" fill="#6aa84f"/><text x="352.8" y="854.3" font-size="5.5" fill="#fff" text-anchor="middle" font-weight="bold">E717</text>
<rect x="623.6" y="810.7" width="12.3" height="7" rx="1.2" fill="#6aa84f"/><text x="629.8" y="816.5" font-size="5.5" fill="#fff" text-anchor="middle" font-weight="bold">A1</text>
<rect x="713.8" y="850.9" width="15.0" height="7" rx="1.2" fill="#6aa84f"/><text x="721.3" y="856.7" font-size="5.5" fill="#fff" text-anchor="middle" font-weight="bold">E35</text>
<rect x="831" y="841.5" width="14.2" height="7" rx="1.2" fill="#6aa84f"/><text x="838.1" y="847.3" font-size="5.5" fill="#fff" text-anchor="middle" font-weight="bold">A13</text>
<rect x="759" y="879.0" width="15.6" height="7" rx="1.2" fill="#6aa84f"/><text x="766.8" y="884.8" font-size="5.5" fill="#fff" text-anchor="middle" font-weight="bold">E45</text>
<rect x="916.3" y="930.5" width="15.0" height="7" rx="1.2" fill="#6aa84f"/><text x="923.8" y="936.3" font-size="5.5" fill="#fff" text-anchor="middle" font-weight="bold">E55</text>
<rect x="912.2" y="967.9" width="15.0" height="7" rx="1.2" fill="#6aa84f"/><text x="919.7" y="973.7" font-size="5.5" fill="#fff" text-anchor="middle" font-weight="bold">E45</text>
<g stroke="#fff" stroke-width="1.5" paint-order="stroke" stroke-opacity="0.7"><circle cx="8.2" cy="797.5" r="2" fill="none" stroke="#666" stroke-width="0.8"/><text x="11.7" y="800.6" font-size="8.5" font-weight="normal" fill="#555" textLength="64.9" lengthAdjust="spacingAndGlyphs">Romans-sur-Isère</text><circle cx="5.5" cy="855.0" r="2" fill="none" stroke="#666" stroke-width="0.8"/><text x="9" y="857.9" font-size="8" font-weight="normal" fill="#555" textLength="18.0" lengthAdjust="spacingAndGlyphs">Crest</text><text x="5" y="888.3" font-size="8" font-weight="normal" fill="#555" textLength="10.0" lengthAdjust="spacingAndGlyphs">nar</text><circle cx="137.5" cy="884.9" r="2" fill="none" stroke="#666" stroke-width="0.8"/><text x="141" y="887.8" font-size="8" font-weight="normal" fill="#555" textLength="16.4" lengthAdjust="spacingAndGlyphs">Gap</text><circle cx="209.5" cy="824.4" r="2" fill="none" stroke="#666" stroke-width="0.8"/><text x="213" y="827.3" font-size="8" font-weight="normal" fill="#555" textLength="33.3" lengthAdjust="spacingAndGlyphs">Briançon</text><circle cx="120.5" cy="950.1" r="2" fill="none" stroke="#666" stroke-width="0.8"/><text x="124" y="953.0" font-size="8" font-weight="normal" fill="#555" textLength="30.9" lengthAdjust="spacingAndGlyphs">Sisteron</text><circle cx="155.5" cy="968.4" r="2" fill="none" stroke="#666" stroke-width="0.8"/><text x="159" y="971.3" font-size="8" font-weight="normal" fill="#555" textLength="59.4" lengthAdjust="spacingAndGlyphs">Digne-les-Bains</text><circle cx="4.5" cy="975.0" r="2" fill="none" stroke="#666" stroke-width="0.8"/><text x="8" y="977.9" font-size="8" font-weight="normal" fill="#555" textLength="42.8" lengthAdjust="spacingAndGlyphs">Carpentras</text><text x="5" y="996.9" font-size="8" font-weight="normal" fill="#555" textLength="12.8" lengthAdjust="spacingAndGlyphs">one</text><circle cx="343.5" cy="794.5" r="2" fill="none" stroke="#666" stroke-width="0.8"/><text x="347" y="798.5" font-size="11" font-weight="bold" fill="#444" textLength="37.5" lengthAdjust="spacingAndGlyphs">Torino</text><circle cx="297.9" cy="805.8" r="2" fill="none" stroke="#666" stroke-width="0.8"/><text x="301.4" y="808.7" font-size="8" font-weight="normal" fill="#555" textLength="41.6" lengthAdjust="spacingAndGlyphs">Moncalieri</text><circle cx="296.5" cy="826.9" r="2" fill="none" stroke="#666" stroke-width="0.8"/><text x="300" y="829.8" font-size="8" font-weight="normal" fill="#555" textLength="33.0" lengthAdjust="spacingAndGlyphs">Pinerolo</text><circle cx="407.5" cy="823.5" r="2" fill="none" stroke="#666" stroke-width="0.8"/><text x="411" y="826.6" font-size="8.5" font-weight="bold" fill="#555" textLength="18.3" lengthAdjust="spacingAndGlyphs">Asti</text><circle cx="491.5" cy="825.1" r="2" fill="none" stroke="#666" stroke-width="0.8"/><text x="495" y="828.0" font-size="8" font-weight="normal" fill="#555" textLength="31.5" lengthAdjust="spacingAndGlyphs">Tortona</text><circle cx="510.5" cy="807.3" r="2" fill="none" stroke="#666" stroke-width="0.8"/><text x="514" y="810.2" font-size="8" font-weight="normal" fill="#555" textLength="34.4" lengthAdjust="spacingAndGlyphs">Voghera</text><circle cx="362.5" cy="861.2" r="2" fill="none" stroke="#666" stroke-width="0.8"/><text x="366" y="864.1" font-size="8" font-weight="normal" fill="#555" textLength="15.8" lengthAdjust="spacingAndGlyphs">Bra</text><circle cx="386.5" cy="859.6" r="2" fill="none" stroke="#666" stroke-width="0.8"/><text x="390" y="862.5" font-size="8" font-weight="normal" fill="#555" textLength="18.2" lengthAdjust="spacingAndGlyphs">Alba</text><circle cx="323.5" cy="917.1" r="2" fill="none" stroke="#666" stroke-width="0.8"/><text x="327" y="920.0" font-size="8" font-weight="normal" fill="#555" textLength="25.8" lengthAdjust="spacingAndGlyphs">Cuneo</text><text x="435.5" y="915.9" font-size="8" font-weight="normal" fill="#555" textLength="33.5" lengthAdjust="spacingAndGlyphs">Arenzano</text><circle cx="445.3" cy="931.0" r="2" fill="none" stroke="#666" stroke-width="0.8"/><text x="448.8" y="933.9" font-size="8" font-weight="normal" fill="#555" textLength="26.5" lengthAdjust="spacingAndGlyphs">Savona</text><circle cx="411.7" cy="976.7" r="2" fill="none" stroke="#666" stroke-width="0.8"/><text x="415.2" y="979.6" font-size="8" font-weight="normal" fill="#555" textLength="29.6" lengthAdjust="spacingAndGlyphs">Albenga</text><circle cx="503.5" cy="913.2" r="2" fill="none" stroke="#666" stroke-width="0.8"/><text x="507" y="917.3" font-size="11.5" font-weight="bold" fill="#333" textLength="42.7" lengthAdjust="spacingAndGlyphs">Genova</text><circle cx="517.0" cy="929.0" r="2" fill="none" stroke="#666" stroke-width="0.8"/><text x="520.5" y="931.9" font-size="8" font-weight="normal" fill="#555" textLength="31.5" lengthAdjust="spacingAndGlyphs">Chiavari</text><circle cx="561.5" cy="936.7" r="2" fill="none" stroke="#666" stroke-width="0.8"/><text x="565" y="939.6" font-size="8" font-weight="normal" fill="#555" textLength="54.5" lengthAdjust="spacingAndGlyphs">Sestri Levante</text><circle cx="615.0" cy="966.8" r="2" fill="none" stroke="#666" stroke-width="0.8"/><text x="618.5" y="969.7" font-size="8" font-weight="normal" fill="#555" textLength="40.6" lengthAdjust="spacingAndGlyphs">La Spezia</text><circle cx="598.5" cy="796.4" r="2" fill="none" stroke="#666" stroke-width="0.8"/><text x="602" y="799.3" font-size="8" font-weight="normal" fill="#555" textLength="39.3" lengthAdjust="spacingAndGlyphs">Piacenza</text><circle cx="677.5" cy="842.0" r="2" fill="none" stroke="#666" stroke-width="0.8"/><text x="681" y="845.1" font-size="8.5" font-weight="normal" fill="#444" textLength="30.0" lengthAdjust="spacingAndGlyphs">Parma</text><circle cx="699.4" cy="888.0" r="2" fill="none" stroke="#666" stroke-width="0.8"/><text x="702.9" y="890.9" font-size="8" font-weight="normal" fill="#555" textLength="36.1" lengthAdjust="spacingAndGlyphs">Sassuolo</text><circle cx="719.9" cy="997.4" r="2" fill="none" stroke="#666" stroke-width="0.8"/><text x="723.4" y="1000.3" font-size="8" font-weight="normal" fill="#555" textLength="33.6" lengthAdjust="spacingAndGlyphs">Pistoia</text><circle cx="863.5" cy="793.7" r="2" fill="none" stroke="#666" stroke-width="0.8"/><text x="867" y="796.6" font-size="8" font-weight="normal" fill="#555" textLength="30.1" lengthAdjust="spacingAndGlyphs">Rovigo</text><circle cx="843.5" cy="834.7" r="2" fill="none" stroke="#666" stroke-width="0.8"/><text x="847" y="837.8" font-size="8.5" font-weight="normal" fill="#444" textLength="31.0" lengthAdjust="spacingAndGlyphs">Ferrara</text><circle cx="749.5" cy="844.8" r="2" fill="none" stroke="#666" stroke-width="0.8"/><text x="753" y="847.7" font-size="8" font-weight="normal" fill="#555" textLength="21.6" lengthAdjust="spacingAndGlyphs">Carpi</text><circle cx="802.3" cy="855.2" r="2" fill="none" stroke="#666" stroke-width="0.8"/><text x="805.8" y="858.1" font-size="8" font-weight="normal" fill="#555" textLength="23.0" lengthAdjust="spacingAndGlyphs">Cento</text><circle cx="754.5" cy="869.7" r="2" fill="none" stroke="#666" stroke-width="0.8"/><text x="758" y="872.8" font-size="8.5" font-weight="normal" fill="#444" textLength="36.6" lengthAdjust="spacingAndGlyphs">Modena</text><text x="754.4" y="898.6" font-size="8" font-weight="normal" fill="#555" textLength="43.6" lengthAdjust="spacingAndGlyphs">Casalecchio</text><text x="771.8" y="907.3" font-size="8" font-weight="normal" fill="#555" textLength="28.2" lengthAdjust="spacingAndGlyphs">di Reno</text><circle cx="808.0" cy="897.0" r="2" fill="none" stroke="#666" stroke-width="0.8"/><text x="811.5" y="901.3" font-size="12" font-weight="bold" fill="#444" textLength="48.7" lengthAdjust="spacingAndGlyphs">Bologna</text><circle cx="855.5" cy="922.2" r="2" fill="none" stroke="#666" stroke-width="0.8"/><text x="859" y="925.1" font-size="8" font-weight="normal" fill="#555" textLength="23.1" lengthAdjust="spacingAndGlyphs">Imola</text><circle cx="875.5" cy="933.1" r="2" fill="none" stroke="#666" stroke-width="0.8"/><text x="879" y="936.0" font-size="8" font-weight="normal" fill="#555" textLength="29.0" lengthAdjust="spacingAndGlyphs">Faenza</text><circle cx="936.5" cy="938.6" r="2" fill="none" stroke="#666" stroke-width="0.8"/><text x="940" y="941.5" font-size="8" font-weight="normal" fill="#555" textLength="25.5" lengthAdjust="spacingAndGlyphs">Cervia</text><circle cx="898.0" cy="945.4" r="2" fill="none" stroke="#666" stroke-width="0.8"/><text x="901.5" y="948.3" font-size="8" font-weight="normal" fill="#444" textLength="20.2" lengthAdjust="spacingAndGlyphs">Forlì</text><circle cx="918.5" cy="910.7" r="2" fill="none" stroke="#666" stroke-width="0.8"/><text x="922" y="913.8" font-size="8.5" font-weight="normal" fill="#444" textLength="38.0" lengthAdjust="spacingAndGlyphs">Ravenna</text><circle cx="924.0" cy="960.5" r="2" fill="none" stroke="#666" stroke-width="0.8"/><text x="927.5" y="963.6" font-size="8.5" font-weight="normal" fill="#444" textLength="32.5" lengthAdjust="spacingAndGlyphs">Cesena</text><circle cx="966.5" cy="974.7" r="2" fill="none" stroke="#666" stroke-width="0.8"/><text x="970" y="977.6" font-size="8" font-weight="normal" fill="#555" textLength="27.0" lengthAdjust="spacingAndGlyphs">Rimini</text><text x="921.7" y="1000.7" font-size="13" font-weight="bold" fill="#333" textLength="68.3" lengthAdjust="spacingAndGlyphs">San Marino</text></g>
<g transform="translate(368.8 964.6) scale(0.948)"><path d="M9 25C7.5 19.5 0.3 15 0.3 9A8.7 8.7 0 0 1 17.7 9C17.7 15 10.5 19.5 9 25Z" fill="#ea4335" stroke="#c5221f" stroke-width="0.8"/><circle cx="9" cy="9" r="3.2" fill="#a8140e"/></g>
<g transform="translate(393.1 962.0) scale(0.944)"><path d="M9 25C7.5 19.5 0.3 15 0.3 9A8.7 8.7 0 0 1 17.7 9C17.7 15 10.5 19.5 9 25Z" fill="#ea4335" stroke="#c5221f" stroke-width="0.8"/><circle cx="9" cy="9" r="3.2" fill="#a8140e"/></g>
<g transform="translate(384.7 972.5) scale(1.000)"><path d="M9 25C7.5 19.5 0.3 15 0.3 9A8.7 8.7 0 0 1 17.7 9C17.7 15 10.5 19.5 9 25Z" fill="#ea4335" stroke="#c5221f" stroke-width="0.8"/><circle cx="9" cy="9" r="3.2" fill="#a8140e"/></g>
<g transform="translate(497.6 844.3) scale(0.984)"><path d="M9 25C7.5 19.5 0.3 15 0.3 9A8.7 8.7 0 0 1 17.7 9C17.7 15 10.5 19.5 9 25Z" fill="#ea4335" stroke="#c5221f" stroke-width="0.8"/><circle cx="9" cy="9" r="3.2" fill="#a8140e"/></g>
<g transform="translate(515.1 875.7) scale(0.972)"><path d="M9 25C7.5 19.5 0.3 15 0.3 9A8.7 8.7 0 0 1 17.7 9C17.7 15 10.5 19.5 9 25Z" fill="#ea4335" stroke="#c5221f" stroke-width="0.8"/><circle cx="9" cy="9" r="3.2" fill="#a8140e"/></g>
<g transform="translate(495.6 886.6) scale(0.936)"><path d="M9 25C7.5 19.5 0.3 15 0.3 9A8.7 8.7 0 0 1 17.7 9C17.7 15 10.5 19.5 9 25Z" fill="#ea4335" stroke="#c5221f" stroke-width="0.8"/><circle cx="9" cy="9" r="3.2" fill="#a8140e"/></g>
<g transform="translate(512.6 892.0) scale(0.880)"><path d="M9 25C7.5 19.5 0.3 15 0.3 9A8.7 8.7 0 0 1 17.7 9C17.7 15 10.5 19.5 9 25Z" fill="#ea4335" stroke="#c5221f" stroke-width="0.8"/><circle cx="9" cy="9" r="3.2" fill="#a8140e"/></g>
<g transform="translate(619.3 938.6) scale(0.928)"><path d="M9 25C7.5 19.5 0.3 15 0.3 9A8.7 8.7 0 0 1 17.7 9C17.7 15 10.5 19.5 9 25Z" fill="#ea4335" stroke="#c5221f" stroke-width="0.8"/><circle cx="9" cy="9" r="3.2" fill="#a8140e"/></g>
<g transform="translate(634.3 941.3) scale(0.932)"><path d="M9 25C7.5 19.5 0.3 15 0.3 9A8.7 8.7 0 0 1 17.7 9C17.7 15 10.5 19.5 9 25Z" fill="#ea4335" stroke="#c5221f" stroke-width="0.8"/><circle cx="9" cy="9" r="3.2" fill="#a8140e"/></g>
<rect x="10.7" y="799.8" width="132.3" height="28" fill="#fff"/><line x1="73.6" y1="801" x2="73.6" y2="827" stroke="#e6e6e6"/>
<text x="23" y="818" font-size="12.5" font-weight="bold" fill="#222" textLength="39" lengthAdjust="spacingAndGlyphs">Mappa</text>
<text x="85" y="818" font-size="12.5" fill="#555" textLength="46" lengthAdjust="spacingAndGlyphs">Satellite</text>
<rect x="979.2" y="799.7" width="28" height="28" fill="#fff"/>
<path d="M988 812V808H992M998 808H1002V812M1002 815.5V819.5H998M992 819.5H988V815.5" fill="none" stroke="#555" stroke-width="1.6"/>
<circle cx="992.8" cy="992" r="14" fill="#fff"/>
<path d="M989 985.5L992.8 982L996.6 985.5M989 998.5L992.8 1002L996.6 998.5M986 988.5L982.5 992L986 995.5M999.6 988.5L1003 992L999.6 995.5" fill="none" stroke="#555" stroke-width="1.5"/>
</svg>
</body></html>
